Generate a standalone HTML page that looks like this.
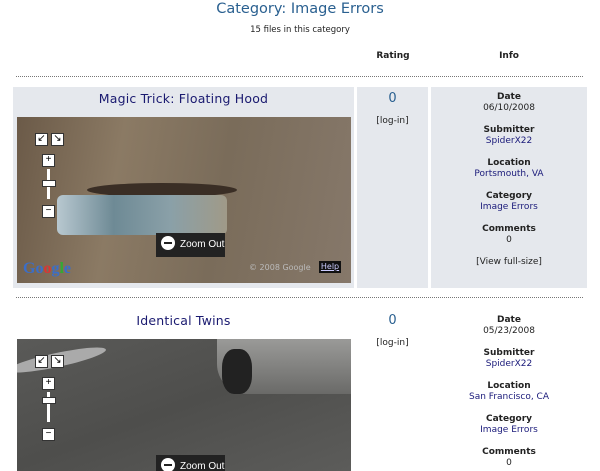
<!DOCTYPE html>
<html><head><style>
body{margin:0;width:600px;height:471px;overflow:hidden;background:#fff;font-family:Verdana,"DejaVu Sans",sans-serif;position:relative}
.a{position:absolute}
.c{text-align:center}
.t{font-size:9px;color:#222}
.b{font-size:9px;font-weight:bold;color:#222}
.l{font-size:9px;color:#1a1a7a}
.h{font-size:12.5px;color:#1a1a70;font-family:"DejaVu Sans",sans-serif;letter-spacing:0.2px}
.dot{border-top:1px dotted #777;height:0}
.ctl{position:absolute;width:11px;height:11px;background:#fff;border:1px solid #333;font-size:10px;line-height:10px;text-align:center;color:#000;font-family:"Liberation Sans",sans-serif}
.zo{position:absolute;width:69px;height:24px;background:#222;color:#fff;font-size:10px;font-family:"Liberation Sans",sans-serif;line-height:24px}
.zo i{display:inline-block;width:14px;height:14px;border-radius:50%;background:#fff;margin:0 5px 0 5px;vertical-align:middle;position:relative;top:-1px}
.zo i:after{content:"";position:absolute;left:3px;top:6px;width:8px;height:2px;background:#222}
.g{margin-top:11px}
</style></head><body>
<div class="a c" style="left:0;width:600px;top:1px;font-size:14.5px;color:#2a6090;font-family:'DejaVu Sans',sans-serif">Category: Image Errors</div>
<div class="a c t" style="left:0;width:600px;top:25px;font-size:8.5px">15 files in this category</div>
<div class="a c b" style="left:357px;width:72px;top:51px">Rating</div>
<div class="a c b" style="left:431px;width:156px;top:51px">Info</div>
<div class="a dot" style="left:16px;width:567px;top:76px"></div>

<div class="a" style="left:13px;top:87px;width:341px;height:201px;background:#e5e8ed"></div>
<div class="a" style="left:357px;top:87px;width:71px;height:201px;background:#e5e8ed"></div>
<div class="a" style="left:431px;top:87px;width:156px;height:201px;background:#e5e8ed"></div>
<div class="a c h" style="left:13px;width:341px;top:91px">Magic Trick: Floating Hood</div>
<div class="a" style="left:17px;top:117px;width:334px;height:166px;background:linear-gradient(100deg,#6b5a48 0%,#8b7a64 30%,#7a6c5a 60%,#86786a 100%);overflow:hidden">
 <div class="a" style="left:70px;top:66px;width:150px;height:14px;background:#3a2e25;border-radius:50%"></div>
 <div class="a" style="left:40px;top:78px;width:170px;height:40px;background:linear-gradient(90deg,#b8c8d0,#6e8a95,#8aa0a8,#a09a88);border-radius:6px"></div>
 <div class="ctl" style="left:18px;top:16px">↙</div><div class="ctl" style="left:34px;top:16px">↘</div>
 <div class="ctl" style="left:25px;top:37px">+</div>
 <div class="a" style="left:30px;top:52px;width:3px;height:30px;background:#fff"></div>
 <div class="a" style="left:25px;top:63px;width:12px;height:5px;background:#fff;border:1px solid #333"></div>
 <div class="ctl" style="left:25px;top:88px">−</div>
 <div class="zo" style="left:139px;top:116px"><i></i>Zoom Out</div>
 <div class="a" style="left:6px;top:143px;font:bold 16px 'Liberation Serif',serif;color:#3b6ec8">Go<span style="color:#d33">o</span>g<span style="color:#3a3">l</span>e</div>
 <div class="a" style="left:232px;top:146px;font-size:8px;color:#bbb">© 2008 Google</div>
 <div class="a" style="left:302px;top:144px;width:22px;height:12px;background:#111;color:#ccf;font-size:8px;text-align:center;text-decoration:underline;line-height:12px">Help</div>
</div>
<div class="a c" style="left:357px;width:71px;top:91px;font-size:13px;color:#2a6090">0</div>
<div class="a c t" style="left:357px;width:71px;top:116px">[log-in]</div>
<div class="a c" style="left:431px;width:156px;top:92px;line-height:11px">
 <div class="b">Date</div><div class="t">06/10/2008</div>
 <div class="b g">Submitter</div><div class="l">SpiderX22</div>
 <div class="b g">Location</div><div class="l">Portsmouth, VA</div>
 <div class="b g">Category</div><div class="l">Image Errors</div>
 <div class="b g">Comments</div><div class="t">0</div>
 <div class="t g">[View full-size]</div>
</div>
<div class="a dot" style="left:16px;width:567px;top:297px"></div>

<div class="a c h" style="left:13px;width:341px;top:313px">Identical Twins</div>
<div class="a" style="left:17px;top:339px;width:334px;height:132px;background:linear-gradient(160deg,#5a5a58 0%,#4e4e4c 50%,#5c5c5a 100%);overflow:hidden">
 <div class="a" style="left:200px;top:0;width:134px;height:55px;background:linear-gradient(180deg,#9a9a98,#6a6a68);border-radius:0 0 0 30px"></div>
 <div class="a" style="left:205px;top:10px;width:30px;height:45px;background:#222;border-radius:40%"></div>
 <div class="a" style="left:-10px;top:14px;width:100px;height:14px;background:#aaa;border-radius:50%;transform:rotate(-12deg)"></div>
 <div class="ctl" style="left:18px;top:16px">↙</div><div class="ctl" style="left:34px;top:16px">↘</div>
 <div class="ctl" style="left:25px;top:38px">+</div>
 <div class="a" style="left:30px;top:53px;width:3px;height:30px;background:#fff"></div>
 <div class="a" style="left:25px;top:58px;width:12px;height:5px;background:#fff;border:1px solid #333"></div>
 <div class="ctl" style="left:25px;top:89px">−</div>
 <div class="zo" style="left:139px;top:116px"><i></i>Zoom Out</div>
</div>
<div class="a c" style="left:357px;width:71px;top:313px;font-size:13px;color:#2a6090">0</div>
<div class="a c t" style="left:357px;width:71px;top:338px">[log-in]</div>
<div class="a c" style="left:431px;width:156px;top:315px;line-height:11px">
 <div class="b">Date</div><div class="t">05/23/2008</div>
 <div class="b g">Submitter</div><div class="l">SpiderX22</div>
 <div class="b g">Location</div><div class="l">San Francisco, CA</div>
 <div class="b g">Category</div><div class="l">Image Errors</div>
 <div class="b g">Comments</div><div class="t">0</div>
</div>
</body></html>
